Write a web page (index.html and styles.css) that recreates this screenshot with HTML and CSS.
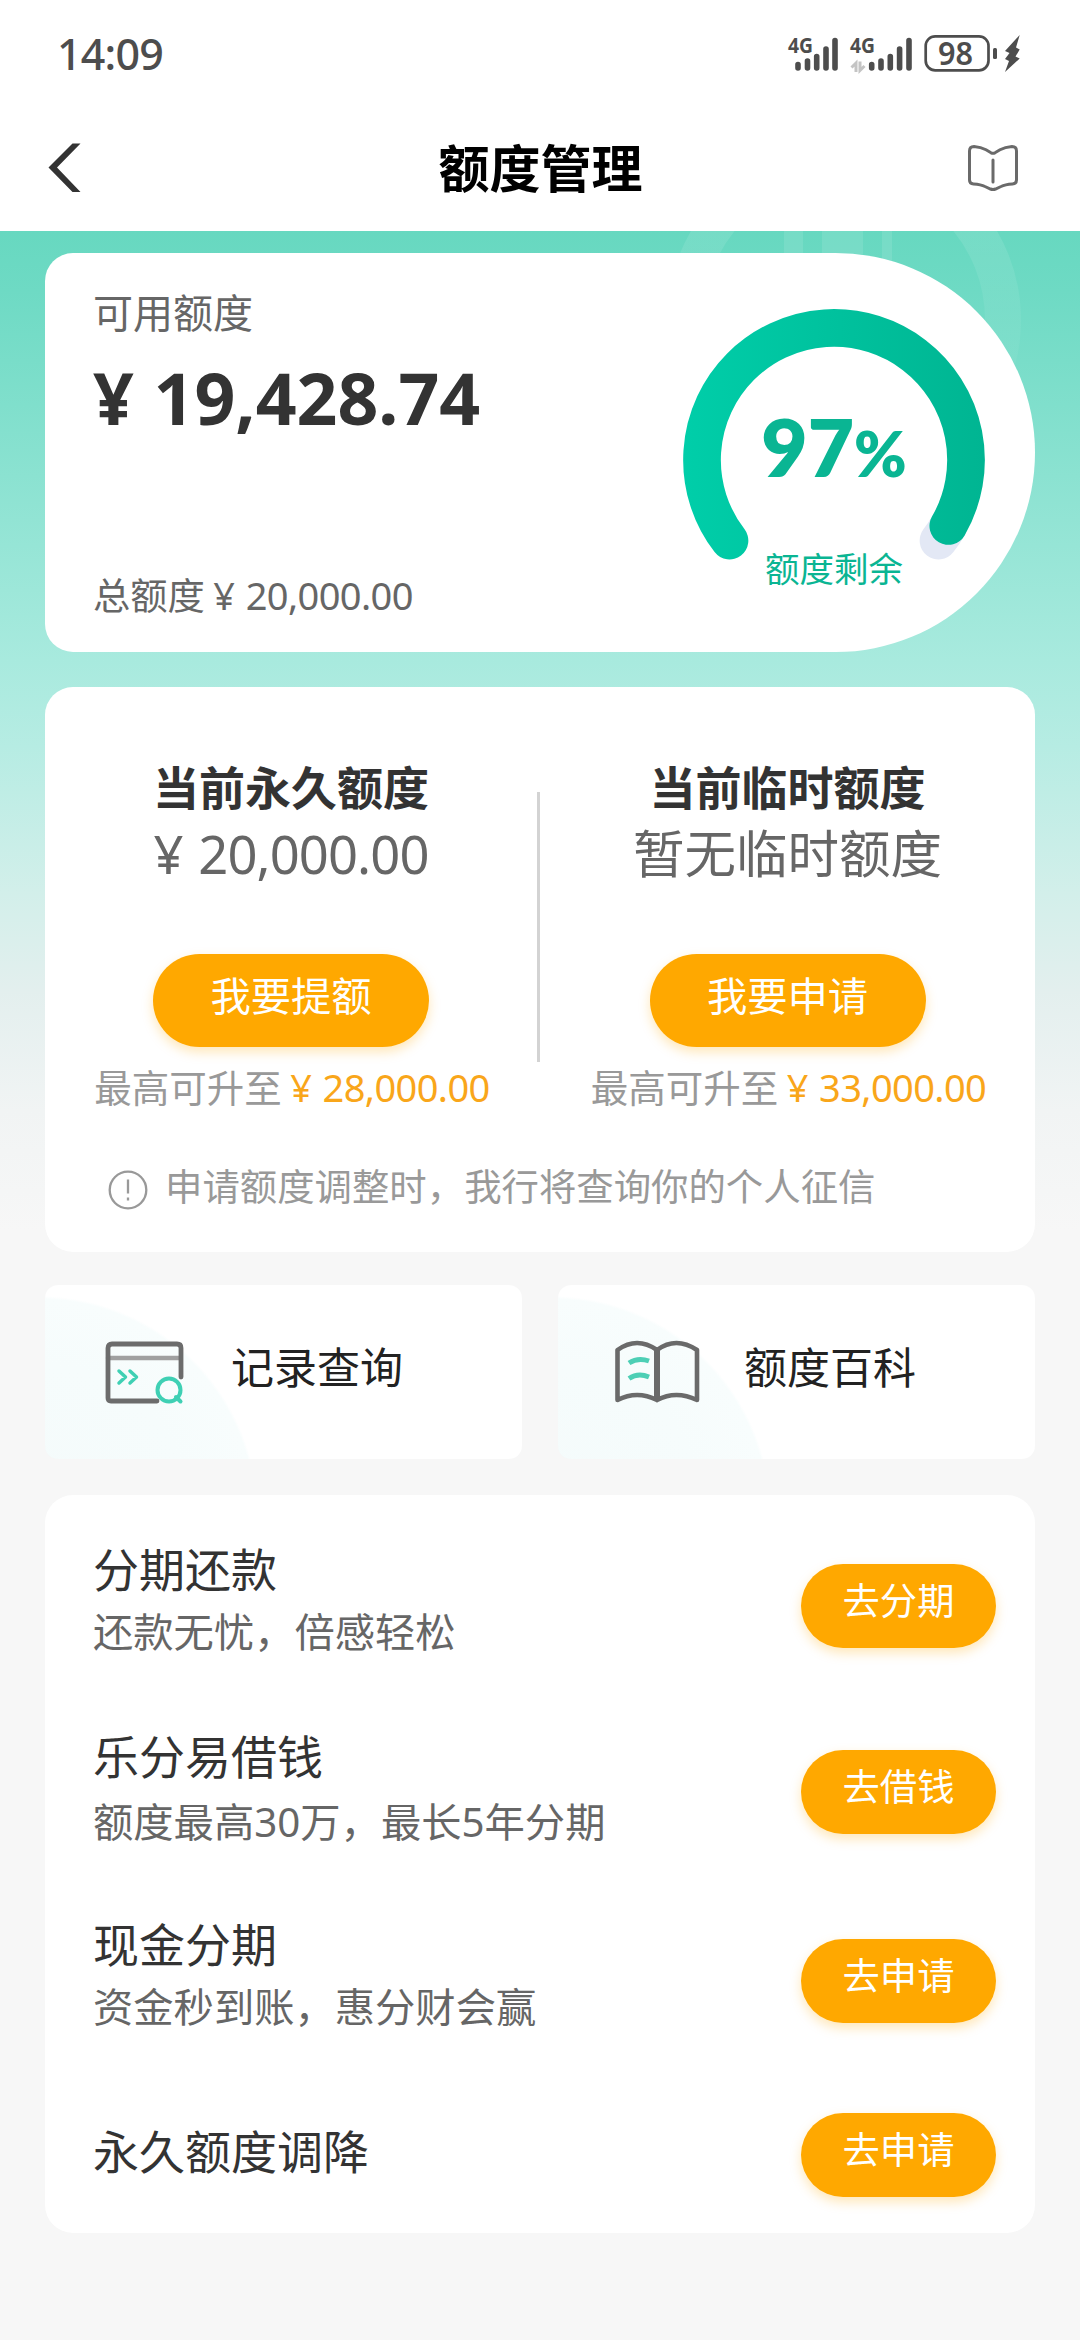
FILE: index.html
```html
<!DOCTYPE html>
<html lang="zh-CN">
<head>
<meta charset="utf-8">
<title>额度管理</title>
<link rel="stylesheet" href="styles.css">
</head>
<body>
<header class="top">
  <div class="status">
    <span class="clock">14:09</span>
    <svg class="status-icons" width="240" height="72" viewBox="784 18 240 72">
      <g class="net">
        <text x="788" y="53" textLength="25" lengthAdjust="spacingAndGlyphs">4G</text>
        <text x="850" y="53" textLength="25" lengthAdjust="spacingAndGlyphs">4G</text>
      </g>
      <g class="bars">
        <path d="M798 64.500v3.500M807.500 61v7M816.700 56.500v11.500M826 49v19M835 40.500v27.500"/>
        <path d="M871.700 64.500v3.500M881 61v7M890.300 56.500v11.500M899.600 49v19M909 40.500v27.500"/>
      </g>
      <path class="arrows" d="M856 72V63L851.500 67.500M860 61.500V70.500L864.500 66"/>
      <rect class="cell" x="925.700" y="36.300" width="62.800" height="34" rx="9.500"/>
      <rect class="fill" x="993" y="48" width="4" height="11" rx="1.500"/>
      <text class="pct" x="938" y="65" textLength="35" lengthAdjust="spacingAndGlyphs">98</text>
      <path class="fill" d="M1019.700 35 1005 51 1009.500 53 1005 59 1009 61 1005 72 1019.700 58.500 1015.500 56.500 1019.700 49.500 1016 47.500Z"/>
    </svg>
  </div>
  <nav class="nav">
    <svg class="back" width="34" height="50" viewBox="0 0 34 50"><path d="M24.500.5H32.500L9 24.500 32.500 49H24.500L.5 24.500Z"/></svg>
    <h1>额度管理</h1>
    <svg class="guide" width="50" height="46" viewBox="0 0 50 46"><path d="M6 1.500Q1.500 1.500 1.500 6V35Q1.500 38.800 5.500 39 13 39.500 17 41.500L22.500 44Q25 45 27.500 44L33 41.500Q37 39.500 44.500 39 48.500 38.800 48.500 35V6Q48.500 1.500 44 1.500 37 2 32 4.800L27 7.800Q25 8.800 23 7.800L18 4.800Q13 2 6 1.500ZM25 15V37"/></svg>
  </nav>
</header>

<main class="page">
  <svg class="deco" width="380" height="330" viewBox="650 0 380 330">
    <defs>
      <linearGradient id="fade" x1="0" y1="0" x2="0" y2="160" gradientUnits="userSpaceOnUse">
        <stop offset="0" stop-color="#fff" stop-opacity=".1"/><stop offset="1" stop-color="#fff" stop-opacity=".03"/>
      </linearGradient>
    </defs>
    <circle cx="844" cy="89" r="159" fill="none" stroke="url(#fade)" stroke-width="36"/>
    <path d="M784 0h19v30h-19zM822 0h41v30h-41zM882 0h10v30h-10z" fill="#fff" fill-opacity=".1"/>
  </svg>

  <section class="card balance">
    <div class="balance-info">
      <p class="label">可用额度</p>
      <p class="available">¥ 19,428.74</p>
      <p class="total">总额度 <span class="num">¥ 20,000.00</span></p>
    </div>
    <div class="gauge">
      <svg width="304" height="260" viewBox="-152 -152 304 260">
        <defs>
          <linearGradient id="arc" x1="-151" y1="0" x2="151" y2="0" gradientUnits="userSpaceOnUse">
            <stop offset="0" stop-color="#00cea9"/><stop offset="1" stop-color="#00b592"/>
          </linearGradient>
        </defs>
        <g fill="none" stroke-width="37.700" stroke-linecap="round">
          <path stroke="#e3e8f5" d="M114.300 66A132 132 0 0 1 104.500 80.600"/>
          <path stroke="url(#arc)" d="M-104.500 80.600A132 132 0 1 1 114.300 66"/>
        </g>
      </svg>
      <div class="gauge-text">
        <p class="rate">97<small>%</small></p>
        <p class="rate-label">额度剩余</p>
      </div>
    </div>
  </section>

  <section class="card limits">
    <div class="limit-cols">
      <div class="limit">
        <h2>当前永久额度</h2>
        <p class="value money">¥ 20,000.00</p>
        <button class="btn btn-lg">我要提额</button>
        <p class="upto">最高可升至 <span class="num">¥ 28,000.00</span></p>
      </div>
      <div class="divider"></div>
      <div class="limit">
        <h2>当前临时额度</h2>
        <p class="value">暂无临时额度</p>
        <button class="btn btn-lg">我要申请</button>
        <p class="upto">最高可升至 <span class="num">¥ 33,000.00</span></p>
      </div>
    </div>
    <p class="notice">
      <svg width="40" height="40" viewBox="0 0 40 40"><circle cx="20" cy="20" r="18.300"/><path d="M20 9.500V23.500M20 27.500V30.500"/></svg>
      <span>申请额度调整时，我行将查询你的个人征信</span>
    </p>
  </section>

  <div class="links">
    <a class="link">
      <svg width="82" height="66" viewBox="0 0 82 66">
        <g fill="none" stroke-linecap="round" stroke-linejoin="round">
          <path d="M4 19H76" stroke="#a0a0a0" stroke-width="4.500"/>
          <path d="M53 62H7Q4 62 4 59V9Q4 5 8 5H73Q77 5 77 9V38" stroke="#6c6c6c" stroke-width="4.800"/>
          <g stroke="#3fd0b4" stroke-width="4"><path d="M15 32 21.500 38 15 44M26 32 32.500 38 26 44" stroke-width="3.500"/><circle cx="65" cy="51" r="11.500"/><path d="M72 58 76.500 62.500"/></g>
        </g>
      </svg>
      <span>记录查询</span>
    </a>
    <a class="link">
      <svg width="88" height="66" viewBox="0 0 88 66">
        <g fill="none" stroke="#6a6a6a" stroke-width="4.600" stroke-linejoin="round">
          <path d="M44 11Q24-3 4.500 11V61Q24 51 44 61ZM44 11Q63-3 84 11V61Q63 51 44 61Z"/>
          <path d="M44 11V61" stroke-width="6"/>
          <path d="M16 24Q25 18 36 22M16 39.500Q25 33.500 36 38" stroke="#4dcfb5" stroke-width="5"/>
        </g>
      </svg>
      <span>额度百科</span>
    </a>
  </div>

  <section class="card services">
    <div class="row row-1"><div><h3>分期还款</h3><p>还款无忧，倍感轻松</p></div><button class="btn">去分期</button></div>
    <div class="row row-2"><div><h3>乐分易借钱</h3><p>额度最高<span class="digits">30</span>万，最长<span class="digits">5</span>年分期</p></div><button class="btn">去借钱</button></div>
    <div class="row row-3"><div><h3>现金分期</h3><p>资金秒到账，惠分财会赢</p></div><button class="btn">去申请</button></div>
    <div class="row row-4"><div><h3>永久额度调降</h3></div><button class="btn">去申请</button></div>
  </section>
</main>
</body>
</html>
```
FILE: styles.css
```css
* { box-sizing: border-box; margin: 0; padding: 0; }

body {
  width: 1080px;
  min-height: 2340px;
  background: #f7f7f7;
  color: #333;
  font-family: "Noto Sans CJK SC", sans-serif;
}

svg { display: block; flex: none; }

/* status bar and navigation */
.top { height: 231px; background: #fff; }
.status {
  display: flex;
  justify-content: space-between;
  align-items: center;
  height: 108px;
  padding: 0 56px 0 57px;
}
.clock {
  color: #4d4d4d;
  font: 500 43px/60px "Noto Sans", sans-serif;
  letter-spacing: -0.8px;
}
.status-icons text { fill: #4d4d4d; font-family: "Noto Sans", sans-serif; }
.net text { font-size: 22px; font-weight: 700; }
.status-icons .pct { font-size: 32px; font-weight: 600; }
.bars { stroke: #4d4d4d; stroke-width: 5.6; stroke-linecap: round; }
.arrows { fill: none; stroke: #c4c4c4; stroke-width: 3; }
.cell { fill: none; stroke: #4d4d4d; stroke-width: 2.7; }
.fill { fill: #4d4d4d; }
.nav {
  display: flex;
  justify-content: space-between;
  align-items: center;
  height: 120px;
  padding: 0 62px 0 48px;
}
.nav h1 { color: #000; font-size: 51px; line-height: 60px; padding: 0 0 5px 31px; font-weight: 700; }
.back { fill: #333; }
.guide { fill: none; stroke: #6a6a6a; stroke-width: 3; stroke-linecap: round; }

/* page body */
.page {
  position: relative;
  padding: 22px 45px 107px;
  background: linear-gradient(#67d8c0 0, #6edac4 60px, #a8eade 429px, #b6ece3 515px, #d2efea 660px, #e3efee 760px, #f1f4f4 880px, #f7f7f7 1000px);
}
.deco { position: absolute; top: 0; left: 650px; }
.card { position: relative; background: #fff; border-radius: 28px; }

/* balance */
.balance {
  display: flex;
  justify-content: space-between;
  height: 399px;
  border-radius: 28px 200px 200px 28px;
  padding: 0 49px 0 48px;
}
.balance-info { display: flex; flex-direction: column; color: #666; }
.label { font-size: 40px; line-height: 60px; padding-top: 28px; }
.available { color: #333; font: 700 71.5px/90px "Noto Sans", sans-serif; word-spacing: 1px; padding-top: 12px; }
.total { font-size: 37.3px; line-height: 50px; margin-top: auto; margin-bottom: 32px; }
.num { font-family: "Noto Sans", sans-serif; font-size: 38px; letter-spacing: -0.6px; word-spacing: 2px; }
.gauge { display: grid; padding-top: 55px; }
.gauge > * { grid-area: 1 / 1; }
.gauge-text { text-align: center; color: #0ab593; }
.rate { font: 800 80px/90px "Lato", sans-serif; padding-top: 93px; }
.rate small { font-size: 63px; }
.rate-label { font-size: 34.5px; line-height: 50px; padding-top: 44px; }

/* limits */
.limits { height: 565px; margin-top: 35px; padding-top: 68px; }
.limit-cols { display: grid; grid-template-columns: 492px 3px 495px; }
.limit { display: flex; flex-direction: column; align-items: center; }
.limit h2 { font-size: 46px; line-height: 60px; font-weight: 700; }
.value { color: #666; font-size: 51.5px; line-height: 70px; padding-top: 1px; }
.money { font-family: "Noto Sans", sans-serif; font-size: 52.5px; letter-spacing: -0.9px; word-spacing: 3px; padding-top: 4px; margin-bottom: -3px; }
.divider { width: 3px; height: 270px; margin-top: 37px; background: #d3d3d3; }
.btn {
  display: block;
  flex: none;
  width: 195px;
  height: 84px;
  padding-bottom: 14px;
  border: 0;
  border-radius: 42px;
  background: #ffa800;
  box-shadow: 0 5px 12px rgba(255, 168, 0, .28);
  color: #fff;
  font-family: inherit;
  font-size: 37.3px;
}
.btn-lg { width: 276px; height: 93px; margin-top: 68px; border-radius: 47px; font-size: 40.3px; }
.upto { color: #999; font-size: 37.5px; line-height: 50px; margin-top: 14px; padding-left: 2px; white-space: nowrap; }
.upto .num { color: #f9a61a; }
.notice {
  display: flex;
  align-items: center;
  gap: 17px;
  padding: 48px 0 0 63px;
  color: #999;
  font-size: 37.4px;
  line-height: 50px;
}
.notice svg { fill: none; stroke: #999; stroke-width: 2.3; margin-top: 4px; }
.notice span { padding-bottom: 5px; }

/* shortcut links */
.links { display: grid; grid-template-columns: 1fr 1fr; gap: 36px; margin-top: 33px; }
.link {
  display: flex;
  align-items: center;
  gap: 45px;
  height: 174px;
  padding-left: 59px;
  border-radius: 13px;
  background:
    radial-gradient(circle at -6px 230px, #f4fbfb 0, #f6fcfc 150px, #f8fdfd 216px, transparent 219px),
    #fff;
  color: #222;
  font-size: 43px;
}
.link + .link { padding-left: 55px; gap: 43px; }
.link span { padding-bottom: 14px; }

/* services */
.services { margin-top: 36px; padding: 17px 39px 1px 48px; }
.row { display: flex; justify-content: space-between; align-items: center; }
.row > div { padding-bottom: 15px; }
.row h3 { font-size: 46px; line-height: 62px; font-weight: 400; }
.row p { color: #666; font-size: 40.3px; line-height: 62px; padding-top: 1px; }
.digits { font-family: "Noto Sans", sans-serif; }
.row-1 { height: 188px; }
.row-2 { height: 184px; }
.row-2 > div { padding-bottom: 9px; }
.row-2 p { padding-top: 4px; }
.row-3 { height: 194px; }
.row-4 { height: 154px; }
.row-4 > div { padding-bottom: 12px; }
```
